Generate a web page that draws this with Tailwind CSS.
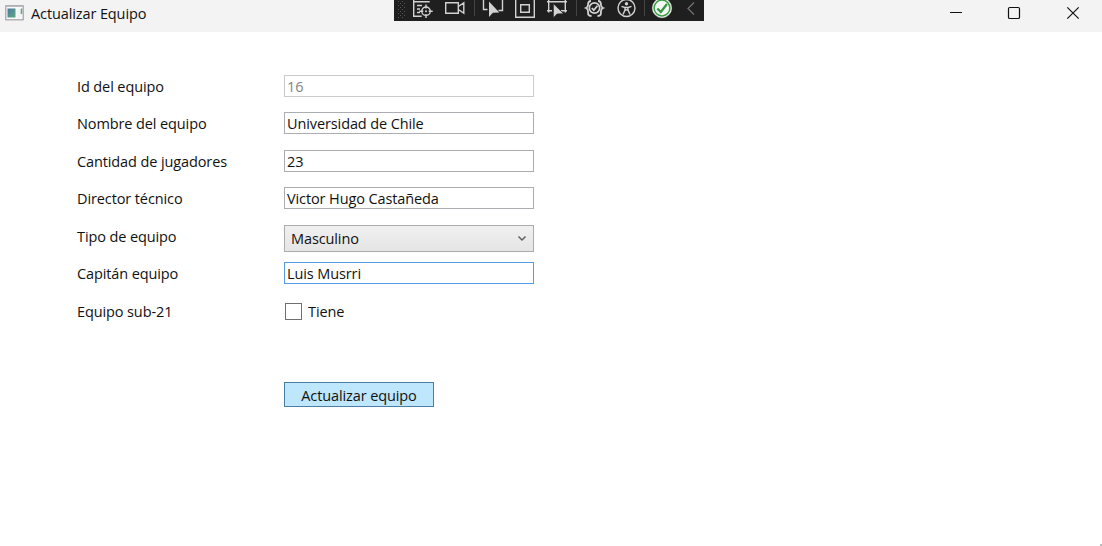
<!DOCTYPE html>
<html lang="es">
<head>
<meta charset="utf-8">
<title>Actualizar Equipo</title>
<script src="https://cdn.jsdelivr.net/npm/@tailwindcss/browser@4"></script>
</head>
<body class="w-[1102px] h-[546px] overflow-hidden bg-white font-['Open_Sans','Noto_Sans',sans-serif] text-[14.5px] tracking-[-0.11px] text-[#111] whitespace-nowrap">
<div class="relative h-full flex flex-col">
  <header class="h-8 shrink-0 bg-[#f3f3f3] flex items-start justify-between">
    <div class="flex w-[394px] pl-[5px]">
      <svg class="mt-[5px]" width="20" height="16" viewBox="0 0 20 16"><defs><linearGradient id="g" x1="0" y1="0" x2="1" y2="1"><stop stop-color="#4f78a4"/><stop offset="1" stop-color="#58ad80"/></linearGradient></defs><rect x=".8" y=".8" width="17.4" height="14" fill="#fafafa" stroke="#a0a0a5" stroke-width="1.2"/><path d="M1 1.5h17" stroke="#b6bbc1"/><path d="M2.500 3.500h8v9h-8z" fill="url(#g)"/><path d="M12 4h4.500v9H12z" fill="#f0f4f3"/><path d="M16.500 3.500v5.500" stroke="#58a687" stroke-width="1.500"/></svg>
      <span class="ml-[6px] mt-[3px] leading-[22px]">Actualizar Equipo</span>
    </div>
    <svg class="shrink-0" width="310" height="21" viewBox="0 0 310 21" fill="none" stroke="#d2d2d2" stroke-width="1.400">
      <rect width="310" height="21" fill="#1f1f1f" stroke="none"/>
      <g stroke="#555" stroke-width="1" stroke-dasharray="1 3"><path d="M4.500 1v18M8.500 1v18"/><path d="M6.500 3v16M10.500 3v16"/></g>
      <path d="M80.500 0v16M182.500 0v16M250.500 0v16" stroke="#444" stroke-width="1"/>
      <path d="M19.700 0v16.300h8M19.700 1.700h16M23 5.500h5M23 9h3M23 12.500h3"/>
      <circle cx="32" cy="11.200" r="4.200"/><circle cx="32" cy="11.200" r="1" fill="#d2d2d2" stroke="none"/><path d="M32 4.500v4M32 14v4M25.300 11.200h4M34.700 11.200h4"/>
      <path d="M51.700 2.700h12.600v10.600H51.700zM64.300 6.500l5.500-3.700v10.400l-5.500-3.700"/>
      <path d="M89.500 0v9.500h4M108.500 0v10.500h-4"/>
      <path d="M95 1.500v15.500l3.900-4.300 6.400-.2z" fill="#d2d2d2" stroke="none"/>
      <path d="M121.700 -1h18.600v18.300h-18.600zM126.700 4.700h8.600v7.600h-8.600z"/>
      <path d="M154.700 0v12.500M171.300 0v12.500M153 1.700h20M153 10.700h5M167 10.700h6"/>
      <path d="M159.300 3.500v14.500l3.800-4 6.700-.2z" fill="#d2d2d2" stroke="#1f1f1f" stroke-width=".8"/>
      <circle cx="200.500" cy="8" r="5.200" stroke-width="1.700"/>
      <path d="M197.800 8l2 2.200 3.700-4.500" stroke-width="1.800"/>
      <path stroke-width="1.800" d="M197 1c-3 0-3 2-3 4 0 1.600-.8 2.500-2 3 1.200.5 2 1.600 2 3.200 0 3 0 4.800 3.500 4.800M204 1c3 0 3 2 3 4 0 1.600.8 2.500 2 3-1.200.5-2 1.600-2 3.200 0 3 0 4.800-3.500 4.800"/>
      <circle cx="232.500" cy="8" r="8.500"/><circle cx="232.500" cy="3.800" r="1.700" fill="#d2d2d2" stroke="none"/><path d="M227.500 6.300l3.500 1.200v2.500l-2 4.500M237.500 6.300L234 7.500v2.500l2 4.500M231 7.500h3M231 10.500l1.500-.8 1.500.8" stroke-width="1.400"/>
      <circle cx="268" cy="8" r="9.700" fill="#eef4ec" stroke="#e6ece5" stroke-width=".5"/><circle cx="268" cy="8" r="7.900" fill="#f4f8f3" stroke="#3c9b46" stroke-width="1.500"/><path d="M263.300 8.500l3.500 3.500 6.200-8" stroke="#379342" stroke-width="2.200"/>
      <path d="M300 2.500L294 8.500l6 6" stroke="#707070" stroke-width="1.300"/>
    </svg>
    <svg class="ml-auto" width="172" height="32" viewBox="0 0 172 32" fill="none" stroke="#111" stroke-width="1.200"><path d="M20 12.500h12" stroke-width="1"/><rect x="78.500" y="7.500" width="11" height="11" rx="1.300"/><path d="M137.300 7.300l11.400 11.400M148.700 7.300l-11.400 11.400"/></svg>
  </header>
  <main class="pl-[77px] pt-[43px]">
    <div class="grid grid-cols-[207px_250px] grid-rows-[37px_38px_37px_38px_37px_38px_82px_25px] items-start leading-[22px]">
      <label class="pt-px">Id del equipo</label>
      <div class="h-[22px] border border-[#cbcbcb] pl-[2px] text-[#838383] leading-[22px]">16</div>
      <label class="pt-px">Nombre del equipo</label>
      <div class="h-[22px] border border-[#abadb3] pl-[2px] leading-[22px]">Universidad de Chile</div>
      <label class="pt-px">Cantidad de jugadores</label>
      <div class="h-[22px] border border-[#abadb3] pl-[2px] leading-[22px]">23</div>
      <label class="pt-px">Director técnico</label>
      <div class="h-[22px] border border-[#abadb3] pl-[2px] leading-[22px]">Victor Hugo Castañeda</div>
      <label class="pt-px">Tipo de equipo</label>
      <div class="h-[27px] border border-[#acacac] bg-linear-to-b from-[#f0f0f0] to-[#e5e5e5] pl-[6px] pr-[6px] flex items-center justify-between"><span>Masculino</span><svg width="10" height="8" viewBox="0 0 10 8" fill="none" stroke="#606060" stroke-width="1.500"><path d="M1.500 1.500L5 5l3.500-3.500"/></svg></div>
      <label class="pt-px">Capitán equipo</label>
      <div class="h-[22px] border border-[#569de5] pl-[2px] leading-[22px]">Luis Musrri</div>
      <label class="pt-px">Equipo sub-21</label>
      <div class="flex pl-px"><span class="mt-[3px] size-[17px] border border-[#707070] bg-white"></span><span class="ml-[6px] pt-px">Tiene</span></div>
      <div></div>
      <button class="w-[150px] h-[25px] border border-[#4c7da5] bg-[#bee6fd] leading-[25px] tracking-[-0.11px]">Actualizar equipo</button>
    </div>
  </main>
  <svg class="absolute right-0 bottom-0" width="2" height="2"><path d="M0 0h2v2H0z" fill="#bbb"/></svg>
</div>
</body>
</html>
